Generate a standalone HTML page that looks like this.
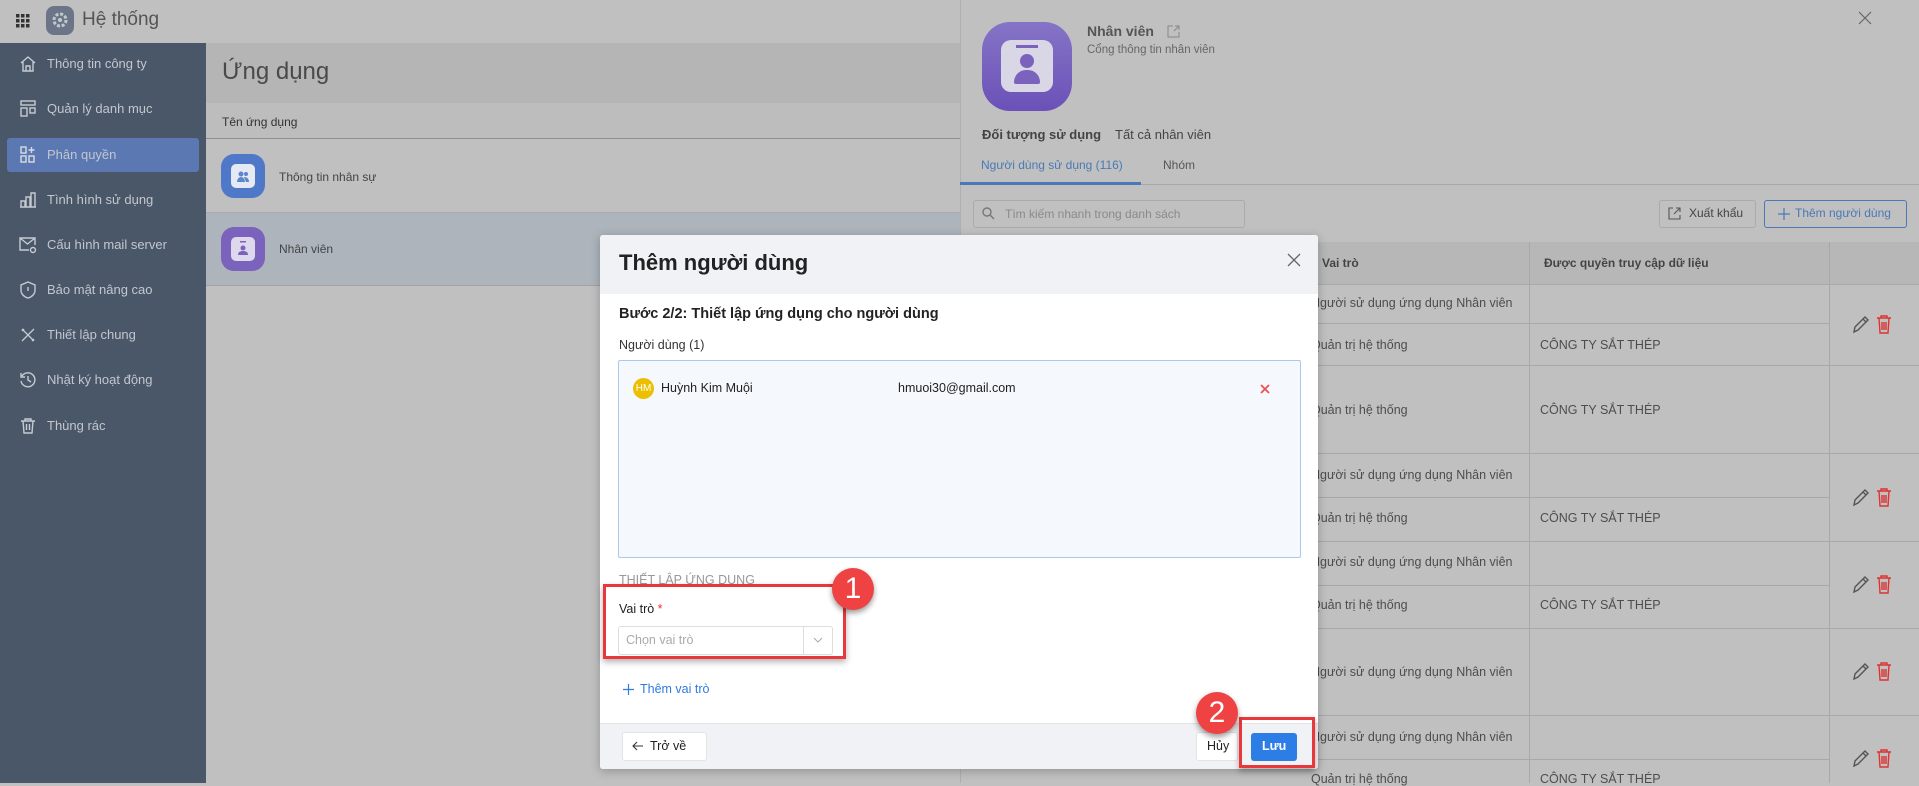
<!DOCTYPE html>
<html><head><meta charset="utf-8"><style>
*{box-sizing:border-box;margin:0;padding:0}
body{width:1919px;height:783px;overflow:hidden;position:relative;font-family:"Liberation Sans",Arial,sans-serif;background:#c0c0c0;color:#333}
.a{position:absolute}
.top{left:0;top:0;width:1919px;height:43px;background:#c0c0c0}
.side{left:0;top:43px;width:206px;height:740px;background:#4a5769}
.si{position:absolute;left:7px;width:192px;height:34px;color:#c2c7ce;font-size:13px;line-height:34px;padding-left:40px}
.si svg{position:absolute;left:12px;top:8px}
.act{background:#5b78b2;border-radius:3px}
.t{white-space:nowrap}
.cell{position:absolute;font-size:12.5px;color:#4d4d4d;white-space:nowrap}
.hl{position:absolute;height:1px;background:#a8a8a8}
.vl{position:absolute;width:1px;background:#a8a8a8}
.badge{position:absolute;width:42px;height:42px;border-radius:50%;background:#ef4343;color:#fff;font-size:30px;line-height:42px;text-align:center;box-shadow:0 3px 6px rgba(0,0,0,.4)}
</style></head><body>
<div class="a top">
 <svg class="a" style="left:16px;top:14px" width="14" height="14" viewBox="0 0 14 14" fill="#333"><rect x="0" y="0" width="3.5" height="3.5"/><rect x="5" y="0" width="3.5" height="3.5"/><rect x="10" y="0" width="3.5" height="3.5"/><rect x="0" y="5" width="3.5" height="3.5"/><rect x="5" y="5" width="3.5" height="3.5"/><rect x="10" y="5" width="3.5" height="3.5"/><rect x="0" y="10" width="3.5" height="3.5"/><rect x="5" y="10" width="3.5" height="3.5"/><rect x="10" y="10" width="3.5" height="3.5"/></svg>
 <div class="a" style="left:46px;top:6px;width:28px;height:29px;border-radius:8px;background:#6a7688"></div>
 <svg class="a" style="left:51px;top:11px" width="18" height="18" viewBox="0 0 18 18"><circle cx="9" cy="9" r="6" fill="none" stroke="#c4c8ce" stroke-width="3" stroke-dasharray="3 1.7"/><circle cx="9" cy="9" r="2" fill="#c4c8ce"/></svg>
 <div class="a t" style="left:82px;top:9px;font-size:19px;color:#555">Hệ thống</div>
</div>
<div class="a side">
 <div class="si" style="top:4px"><svg width="18" height="18" viewBox="0 0 18 18" fill="none" stroke="#c6cbd2" stroke-width="1.4"><path d="M2 8L9 2l7 6M4 7v9h10V7M7 16v-5h4v5"/></svg>Thông tin công ty</div>
 <div class="si" style="top:49px"><svg width="18" height="18" viewBox="0 0 18 18" fill="none" stroke="#c6cbd2" stroke-width="1.4"><rect x="2" y="1" width="14" height="4"/><rect x="2" y="8" width="6" height="8"/><rect x="11" y="8" width="5" height="5"/></svg>Quản lý danh mục</div>
 <div class="si act" style="top:95px"><svg width="18" height="18" viewBox="0 0 18 18" fill="none" stroke="#d8dce2" stroke-width="1.4"><rect x="2" y="1" width="5" height="6"/><rect x="2" y="10" width="5" height="6"/><rect x="10" y="10" width="5" height="6"/><path d="M12.5 1v6M9.5 4h6"/></svg>Phân quyền</div>
 <div class="si" style="top:140px"><svg width="18" height="18" viewBox="0 0 18 18" fill="none" stroke="#c6cbd2" stroke-width="1.4"><path d="M1 16h16M2 16V10h4v6M7 16V6h4v10M12 16V2h4v14"/></svg>Tình hình sử dụng</div>
 <div class="si" style="top:185px"><svg width="18" height="18" viewBox="0 0 18 18" fill="none" stroke="#c6cbd2" stroke-width="1.4"><path d="M10 14H1V2h15v7M1 2l7.5 6L16 2"/><circle cx="14" cy="14" r="2.5"/></svg>Cấu hình mail server</div>
 <div class="si" style="top:230px"><svg width="18" height="18" viewBox="0 0 18 18" fill="none" stroke="#c6cbd2" stroke-width="1.4"><path d="M9 1l7 3v5c0 4-3 7-7 8-4-1-7-4-7-8V4z"/><path d="M9 6v4"/></svg>Bảo mật nâng cao</div>
 <div class="si" style="top:275px"><svg width="18" height="18" viewBox="0 0 18 18" fill="none" stroke="#c6cbd2" stroke-width="1.3"><path d="M3 3l12 12M15 3L3 15M5 3l-2 2M13 15l2-2"/></svg>Thiết lập chung</div>
 <div class="si" style="top:320px"><svg width="18" height="18" viewBox="0 0 18 18" fill="none" stroke="#c6cbd2" stroke-width="1.4"><path d="M3 5a7 7 0 1 1-1 5M2 2v4h4M9 5v4l3 2"/></svg>Nhật ký hoạt động</div>
 <div class="si" style="top:366px"><svg width="18" height="18" viewBox="0 0 18 18" fill="none" stroke="#c6cbd2" stroke-width="1.4"><path d="M2 4h14M6 4V2h6v2M4 4l1 12h8l1-12M7.5 7v6M10.5 7v6"/></svg>Thùng rác</div>
</div>
<div class="a" style="left:206px;top:43px;width:754px;height:60px;background:#b5b5b5"></div>
<div class="a t" style="left:222px;top:58px;font-size:24px;color:#4a4a4a">Ứng dụng</div>
<div class="a" style="left:206px;top:103px;width:754px;height:36px;background:#bdbdbd;border-bottom:1px solid #8e8e8e"></div>
<div class="a t" style="left:222px;top:115px;font-size:12px;color:#333">Tên ứng dụng</div>
<div class="a" style="left:206px;top:212px;width:754px;height:1px;background:#aaa"></div>
<div class="a" style="left:206px;top:213px;width:754px;height:73px;background:#adb4bc;border-bottom:1px solid #a2a2a2"></div>
<div class="a" style="left:221px;top:154px;width:44px;height:44px;border-radius:13px;background:#4f79c8"></div>
<div class="a" style="left:231px;top:164px;width:24px;height:24px;border-radius:5px;background:#e4e9f3"></div>
<svg class="a" style="left:235px;top:168px" width="16" height="16" viewBox="0 0 16 16" fill="#5f85cc"><circle cx="6" cy="6" r="2.5"/><circle cx="11" cy="6" r="2"/><path d="M2 14c0-3 2-5 4-5s4 2 4 5zM9 9c2 0 5 1 5 5h-3"/></svg>
<div class="a t" style="left:279px;top:170px;font-size:12px;color:#444">Thông tin nhân sự</div>
<div class="a" style="left:221px;top:227px;width:44px;height:44px;border-radius:13px;background:#7a62bd"></div>
<div class="a" style="left:231px;top:237px;width:24px;height:24px;border-radius:5px;background:#ddd8ec"></div>
<svg class="a" style="left:235px;top:240px" width="16" height="18" viewBox="0 0 16 18" fill="#7a62bd"><rect x="5" y="1" width="6" height="1.5"/><circle cx="8" cy="8" r="2.5"/><path d="M3 15c0-3 2-4 5-4s5 1 5 4z"/></svg>
<div class="a t" style="left:279px;top:242px;font-size:12px;color:#444">Nhân viên</div>
<div class="a" style="left:960px;top:0;width:959px;height:783px;background:#c0c0c0;border-left:1px solid #b0b0b0"></div>
<div class="a" style="left:982px;top:22px;width:90px;height:89px;border-radius:28px;background:linear-gradient(#8574c6,#6b51b8)"></div>
<div class="a" style="left:1001px;top:40px;width:52px;height:52px;border-radius:10px;background:#d9d6e6"></div>
<div class="a" style="left:1016px;top:45px;width:22px;height:3px;background:#7a62bd"></div>
<div class="a" style="left:1020px;top:54px;width:14px;height:14px;border-radius:50%;background:#7a62bd"></div>
<div class="a" style="left:1014px;top:70px;width:26px;height:14px;border-radius:13px 13px 2px 2px;background:#7a62bd"></div>
<div class="a t" style="left:1087px;top:23px;font-size:14px;font-weight:bold;color:#555">Nhân viên</div>
<svg class="a" style="left:1167px;top:25px" width="13" height="13" viewBox="0 0 13 13" fill="none" stroke="#888" stroke-width="1"><path d="M6 1H1v11h11V7M7 6l5-5M8 1h4v4"/></svg>
<div class="a t" style="left:1087px;top:44px;font-size:11.5px;color:#666">Cổng thông tin nhân viên</div>
<svg class="a" style="left:1858px;top:11px" width="14" height="14" viewBox="0 0 14 14" stroke="#666" stroke-width="1.2"><path d="M1 1l12 12M13 1L1 13"/></svg>
<div class="a t" style="left:982px;top:127px;font-size:13px;font-weight:bold;color:#444">Đối tượng sử dụng</div>
<div class="a t" style="left:1115px;top:127px;font-size:13px;color:#444">Tất cả nhân viên</div>
<div class="a t" style="left:981px;top:158px;font-size:12px;color:#4a79b5">Người dùng sử dụng (116)</div>
<div class="a t" style="left:1163px;top:158px;font-size:12px;color:#555">Nhóm</div>
<div class="a" style="left:960px;top:184px;width:959px;height:1px;background:#a8a8a8"></div>
<div class="a" style="left:960px;top:182px;width:181px;height:3px;background:#4a79b5"></div>
<div class="a" style="left:973px;top:200px;width:272px;height:28px;border:1px solid #aaa;border-radius:3px"></div>
<svg class="a" style="left:982px;top:207px" width="13" height="13" viewBox="0 0 13 13" fill="none" stroke="#777" stroke-width="1.4"><circle cx="5" cy="5" r="4"/><path d="M8 8l4 4"/></svg>
<div class="a t" style="left:1005px;top:207px;font-size:12px;color:#8a8a8a">Tìm kiếm nhanh trong danh sách</div>
<div class="a" style="left:1659px;top:200px;width:97px;height:28px;border:1px solid #aaa;border-radius:3px"></div>
<svg class="a" style="left:1668px;top:207px" width="13" height="13" viewBox="0 0 13 13" fill="none" stroke="#555" stroke-width="1.1"><path d="M5 1H1v11h11V8M6 7l6-6M8 1h4v4"/></svg>
<div class="a t" style="left:1689px;top:206px;font-size:12px;color:#444">Xuất khẩu</div>
<div class="a" style="left:1764px;top:200px;width:143px;height:28px;border:1px solid #4a79b5;border-radius:3px"></div>
<svg class="a" style="left:1778px;top:208px" width="12" height="12" viewBox="0 0 12 12" stroke="#4a79b5" stroke-width="1.2"><path d="M6 0v12M0 6h12"/></svg>
<div class="a t" style="left:1795px;top:206px;font-size:12px;color:#4a79b5">Thêm người dùng</div>
<div class="a" style="left:960px;top:242px;width:959px;height:42px;background:#b7b7b7"></div>
<div class="cell" style="left:1322px;top:256px;font-weight:bold;font-size:12px;color:#444">Vai trò</div>
<div class="cell" style="left:1544px;top:256px;font-weight:bold;font-size:12px;color:#444">Được quyền truy cập dữ liệu</div>
<div class="vl" style="left:1529px;top:242px;height:541px"></div>
<div class="vl" style="left:1829px;top:242px;height:541px"></div>
<div class="hl" style="left:960px;top:284px;width:959px"></div>
<div class="hl" style="left:960px;top:323px;width:869px"></div>
<div class="hl" style="left:960px;top:365px;width:959px"></div>
<div class="hl" style="left:960px;top:453px;width:959px"></div>
<div class="hl" style="left:960px;top:497px;width:869px"></div>
<div class="hl" style="left:960px;top:541px;width:959px"></div>
<div class="hl" style="left:960px;top:585px;width:869px"></div>
<div class="hl" style="left:960px;top:628px;width:959px"></div>
<div class="hl" style="left:960px;top:715px;width:959px"></div>
<div class="hl" style="left:960px;top:759px;width:869px"></div>
<div class="cell" style="left:1311px;top:296px">Người sử dụng ứng dụng Nhân viên</div>
<div class="cell" style="left:1311px;top:338px">Quản trị hệ thống</div><div class="cell" style="left:1540px;top:338px">CÔNG TY SẮT THÉP</div>
<div class="cell" style="left:1311px;top:403px">Quản trị hệ thống</div><div class="cell" style="left:1540px;top:403px">CÔNG TY SẮT THÉP</div>
<div class="cell" style="left:1311px;top:468px">Người sử dụng ứng dụng Nhân viên</div>
<div class="cell" style="left:1311px;top:511px">Quản trị hệ thống</div><div class="cell" style="left:1540px;top:511px">CÔNG TY SẮT THÉP</div>
<div class="cell" style="left:1311px;top:555px">Người sử dụng ứng dụng Nhân viên</div>
<div class="cell" style="left:1311px;top:598px">Quản trị hệ thống</div><div class="cell" style="left:1540px;top:598px">CÔNG TY SẮT THÉP</div>
<div class="cell" style="left:1311px;top:665px">Người sử dụng ứng dụng Nhân viên</div>
<div class="cell" style="left:1311px;top:730px">Người sử dụng ứng dụng Nhân viên</div>
<div class="cell" style="left:1311px;top:772px">Quản trị hệ thống</div><div class="cell" style="left:1540px;top:772px">CÔNG TY SẮT THÉP</div>
<div class="cell" style="left:1061px;top:748px;color:#666">ptyen@support.misa.com.vn</div>
<svg class="a" style="left:1851px;top:313px" width="42" height="22" viewBox="0 0 42 22" fill="none" stroke-width="1.4"><path stroke="#555" d="M3 19l1-5L14 4l3 3L7 17zM12 6l3 3"/><g stroke="#d33"><path d="M26 5h14M30 5V3h6v2M28 5l1 15h8l1-15M31 9v8M33 9v8M35 9v8"/></g></svg>
<svg class="a" style="left:1851px;top:486px" width="42" height="22" viewBox="0 0 42 22" fill="none" stroke-width="1.4"><path stroke="#555" d="M3 19l1-5L14 4l3 3L7 17zM12 6l3 3"/><g stroke="#d33"><path d="M26 5h14M30 5V3h6v2M28 5l1 15h8l1-15M31 9v8M33 9v8M35 9v8"/></g></svg>
<svg class="a" style="left:1851px;top:573px" width="42" height="22" viewBox="0 0 42 22" fill="none" stroke-width="1.4"><path stroke="#555" d="M3 19l1-5L14 4l3 3L7 17zM12 6l3 3"/><g stroke="#d33"><path d="M26 5h14M30 5V3h6v2M28 5l1 15h8l1-15M31 9v8M33 9v8M35 9v8"/></g></svg>
<svg class="a" style="left:1851px;top:660px" width="42" height="22" viewBox="0 0 42 22" fill="none" stroke-width="1.4"><path stroke="#555" d="M3 19l1-5L14 4l3 3L7 17zM12 6l3 3"/><g stroke="#d33"><path d="M26 5h14M30 5V3h6v2M28 5l1 15h8l1-15M31 9v8M33 9v8M35 9v8"/></g></svg>
<svg class="a" style="left:1851px;top:747px" width="42" height="22" viewBox="0 0 42 22" fill="none" stroke-width="1.4"><path stroke="#555" d="M3 19l1-5L14 4l3 3L7 17zM12 6l3 3"/><g stroke="#d33"><path d="M26 5h14M30 5V3h6v2M28 5l1 15h8l1-15M31 9v8M33 9v8M35 9v8"/></g></svg>
<div class="a" style="left:600px;top:235px;width:718px;height:534px;background:#fff;border-radius:3px;box-shadow:0 2px 10px rgba(0,0,0,.25);overflow:hidden">
 <div class="a" style="left:0;top:0;width:718px;height:59px;background:#f0f2f5"></div>
 <div class="a t" style="left:19px;top:15px;font-size:22px;font-weight:bold;color:#222">Thêm người dùng</div>
 <svg class="a" style="left:687px;top:18px" width="14" height="14" viewBox="0 0 14 14" stroke="#666" stroke-width="1.3"><path d="M1 1l12 12M13 1L1 13"/></svg>
 <div class="a t" style="left:19px;top:71px;font-size:14.5px;font-weight:bold;color:#222">Bước 2/2: Thiết lập ứng dụng cho người dùng</div>
 <div class="a t" style="left:19px;top:103px;font-size:12.5px;color:#333">Người dùng (1)</div>
 <div class="a" style="left:18px;top:125px;width:683px;height:198px;background:#f5f8fd;border:1px solid #a9c9f1;border-radius:2px"></div>
 <div class="a" style="left:33px;top:143px;width:21px;height:21px;border-radius:50%;background:#ecbf00;color:#fff;font-size:10px;line-height:21px;text-align:center">HM</div>
 <div class="a t" style="left:61px;top:146px;font-size:12.5px;color:#222">Huỳnh Kim Muội</div>
 <div class="a t" style="left:298px;top:146px;font-size:12.5px;color:#222">hmuoi30@gmail.com</div>
 <svg class="a" style="left:660px;top:149px" width="10" height="10" viewBox="0 0 10 10" stroke="#f05050" stroke-width="1.8"><path d="M1 1l8 8M9 1L1 9"/></svg>
 <div class="a t" style="left:19px;top:338px;font-size:12.5px;color:#999">THIẾT LẬP ỨNG DỤNG</div>
 <div class="a t" style="left:19px;top:367px;font-size:12.5px;color:#222">Vai trò <span style="color:#e33">*</span></div>
 <div class="a" style="left:18px;top:391px;width:215px;height:29px;border:1px solid #ddd;border-radius:3px"></div>
 <div class="a" style="left:203px;top:392px;width:1px;height:27px;background:#ddd"></div>
 <svg class="a" style="left:213px;top:402px" width="10" height="6" viewBox="0 0 10 6" fill="none" stroke="#aaa"><path d="M1 1l4 4 4-4"/></svg>
 <div class="a t" style="left:26px;top:398px;font-size:12.5px;color:#aaa">Chọn vai trò</div>
 <svg class="a" style="left:23px;top:449px" width="11" height="11" viewBox="0 0 11 11" stroke="#2f7be0" stroke-width="1.2"><path d="M5.5 0v11M0 5.5h11"/></svg>
 <div class="a t" style="left:40px;top:447px;font-size:12.5px;color:#2f7be0">Thêm vai trò</div>
 <div class="a" style="left:0;top:488px;width:718px;height:46px;background:#f0f2f5;border-top:1px solid #e2e4e8"></div>
 <div class="a" style="left:22px;top:497px;width:85px;height:29px;background:#fff;border:1px solid #e4e4e4;border-radius:3px"></div>
 <svg class="a" style="left:32px;top:506px" width="12" height="10" viewBox="0 0 12 10" fill="none" stroke="#333" stroke-width="1.1"><path d="M11 5H1M5 1L1 5l4 4"/></svg>
 <div class="a t" style="left:50px;top:504px;font-size:12.5px;color:#222">Trở về</div>
 <div class="a" style="left:596px;top:497px;width:42px;height:29px;background:#fff;border:1px solid #e4e4e4;border-radius:3px"></div>
 <div class="a t" style="left:607px;top:504px;font-size:12.5px;color:#222">Hủy</div>
 <div class="a" style="left:651px;top:498px;width:46px;height:28px;background:#2d7de6;border-radius:3px"></div>
 <div class="a t" style="left:662px;top:504px;font-size:12.5px;color:#fff;font-weight:bold">Lưu</div>
</div>
<div class="a" style="left:603px;top:584px;width:243px;height:75px;border:3px solid #e8383c;box-shadow:0 3px 6px rgba(0,0,0,.3)"></div>
<div class="badge" style="left:832px;top:568px">1</div>
<div class="a" style="left:1239px;top:717px;width:76px;height:51px;border:3px solid #e8383c;box-shadow:0 3px 6px rgba(0,0,0,.3)"></div>
<div class="badge" style="left:1196px;top:692px">2</div>
</body></html>
